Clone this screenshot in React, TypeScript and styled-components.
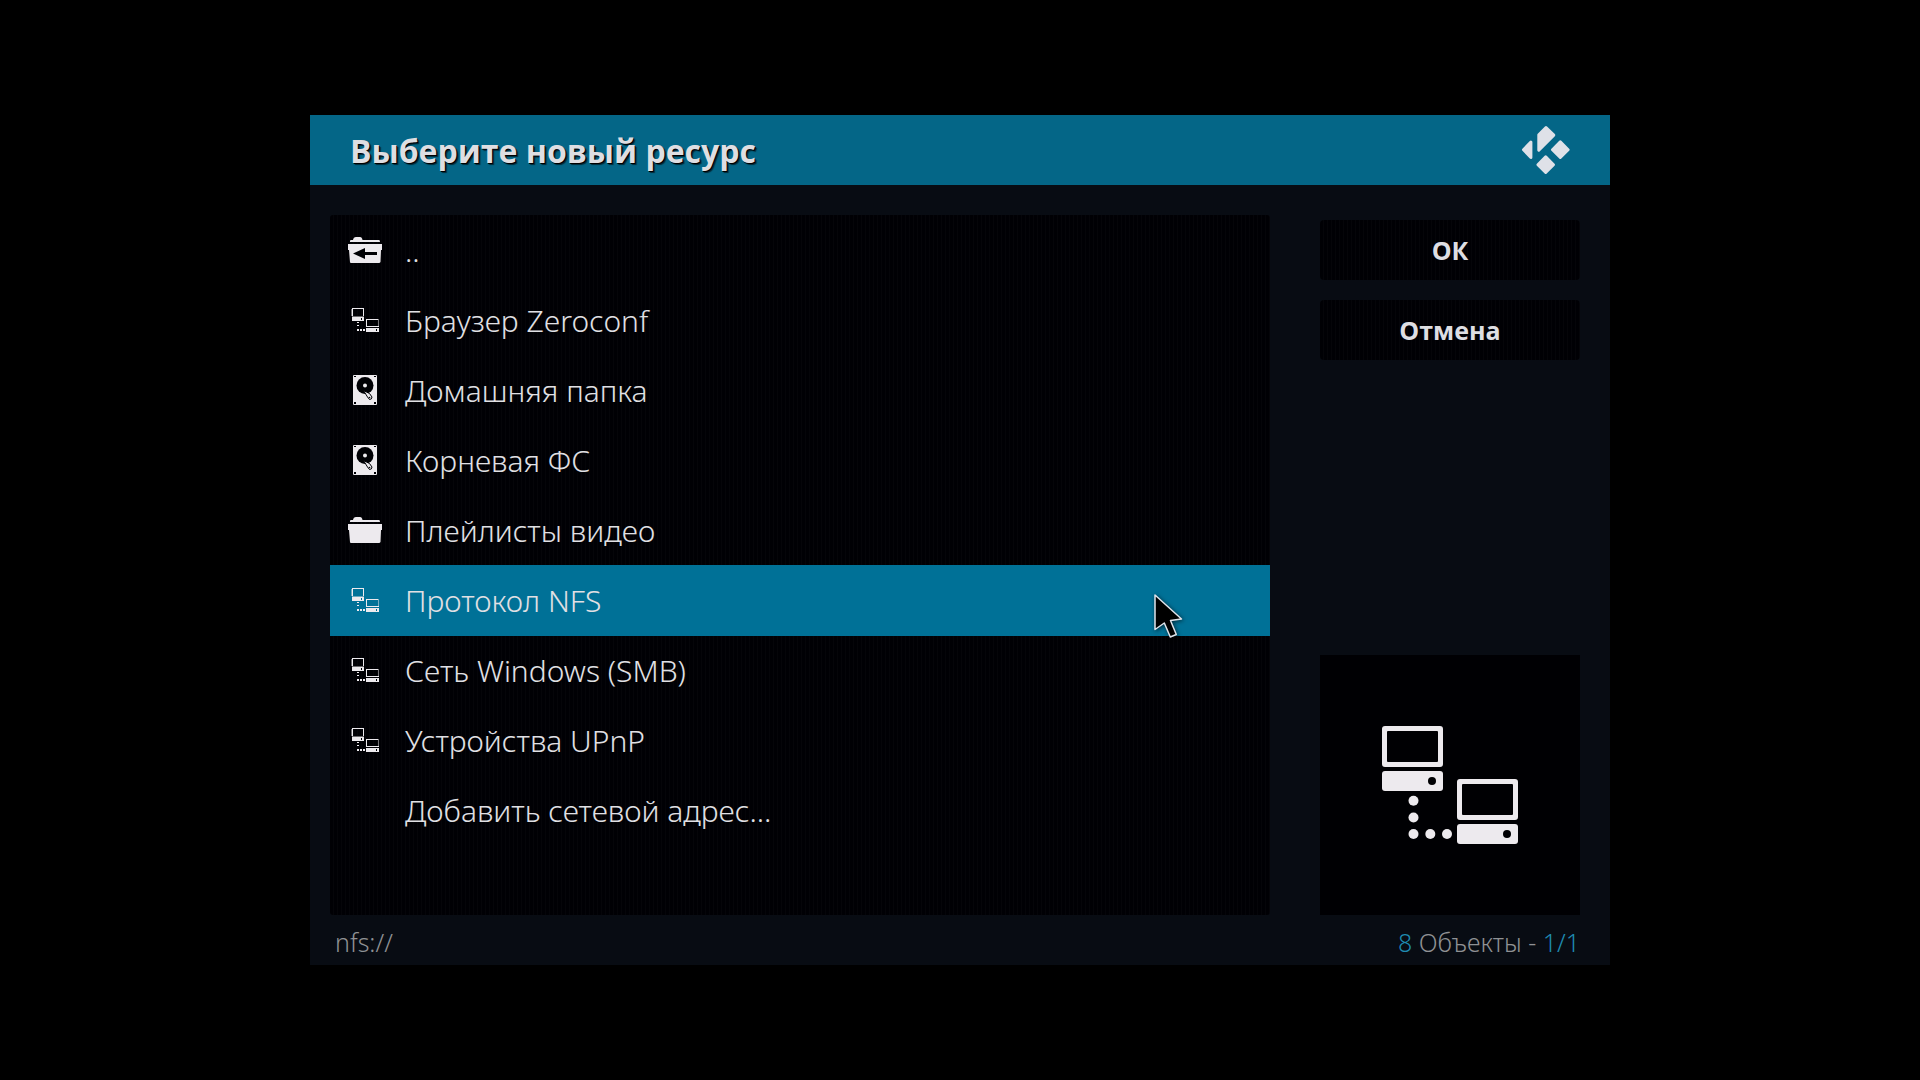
import React, { useState } from "react";
import styled, { createGlobalStyle } from "styled-components";

const colors = {
  backdrop: "#000000",
  dialog: "#080c13",
  panel: "#000004",
  stripe: "#050509",
  header: "#046687",
  accent: "#007197",
  text: "#e0e0e4",
  bright: "#dedee2",
  icon: "#edeaee",
  muted: "#8f9194",
  link: "#1f8ab0",
};

const GlobalStyle = createGlobalStyle`
  *, *::before, *::after { box-sizing: border-box; }
  body {
    margin: 0;
    background: ${colors.backdrop};
    color: ${colors.text};
    font-family: "Noto Sans", "Open Sans", sans-serif;
  }
`;

const Page = styled.main`
  min-height: 100vh;
  display: grid;
  place-items: center;
  padding: 20px;
`;

const Dialog = styled.section`
  width: 100%;
  max-width: 1300px;
  background: ${colors.dialog};
`;

const Header = styled.header`
  display: flex;
  align-items: center;
  justify-content: space-between;
  height: 70px;
  padding: 0 40px;
  background: ${colors.header};
`;

const Title = styled.h1`
  margin: 0;
  padding-top: 2px;
  font-family: "Open Sans", "Noto Sans", sans-serif;
  font-size: 32px;
  line-height: 44px;
  font-weight: 700;
  color: ${colors.bright};
  text-shadow: 1px 1px 0 #000, 2px 2px 1px rgba(0, 0, 0, 0.6);
`;

const Content = styled.div`
  display: flex;
  gap: 50px;
  padding: 30px 30px 0 20px;
`;

const striped = `
  background: repeating-linear-gradient(90deg, ${colors.panel} 0 3px, ${colors.stripe} 3px 4px);
`;

const Sources = styled.ul`
  flex: 1;
  min-height: 700px;
  margin: 0;
  padding: 0;
  list-style: none;
  border-radius: 3px;
  ${striped}
`;

const SourceItem = styled.li`
  position: relative;
`;

const SourceButton = styled.button<{ $selected: boolean }>`
  display: flex;
  align-items: center;
  gap: 20px;
  width: 100%;
  height: 70px;
  padding: 0 15px;
  border: 0;
  background: ${(p) => (p.$selected ? colors.accent : "transparent")};
  box-shadow: ${(p) => (p.$selected ? `0 1px 0 ${colors.accent}` : "none")};
  color: ${colors.text};
  font: 300 30px/40px "Noto Sans", "Open Sans", sans-serif;
  text-align: left;
`;

const SourceLabel = styled.span`
  padding-top: 2px;
`;

const IconSlot = styled.span`
  flex: none;
  width: 40px;
  height: 40px;
`;

const Side = styled.aside`
  display: flex;
  flex-direction: column;
  gap: 20px;
  width: 260px;
  padding-top: 5px;
`;

const ActionButton = styled.button`
  height: 60px;
  border: 0;
  border-radius: 4px;
  color: ${colors.bright};
  font: 700 25px/34px "Open Sans", "Noto Sans", sans-serif;
  ${striped}
`;

const Preview = styled.div`
  display: grid;
  place-items: center;
  height: 260px;
  margin-top: auto;
  background: #000003;
`;

const Footer = styled.footer`
  display: flex;
  justify-content: space-between;
  height: 50px;
  padding: 10px 30px 0 25px;
  font-size: 25px;
  line-height: 34px;
  font-weight: 300;
  color: ${colors.muted};
`;

const Count = styled.span`
  color: ${colors.link};
`;

const Pointer = styled.svg`
  position: absolute;
  top: 27px;
  right: 86px;
  pointer-events: none;
  filter: drop-shadow(1px 1px 2px rgba(0, 0, 0, 0.6));
`;

const KodiLogo = () => (
  <svg width="50" height="50" viewBox="-1 0 50 50" role="img" aria-label="Kodi">
    <g fill="#dfe1e8" stroke="#dfe1e8" strokeWidth="3" strokeLinejoin="round">
      <path d="M25 2.6 L32.8 10.1 L17.8 25.2 V9.8 Z" />
      <path d="M9.9 17 V32.4 L2.5 24.7 Z" />
      <path d="M39.3 16.9 L47.1 24.7 L39.3 32.5 L31.5 24.7 Z" />
      <path d="M24.7 31.9 L32.5 39.7 L24.7 47.5 L16.9 39.7 Z" />
    </g>
  </svg>
);

const LargeNetworkIcon = () => (
  <svg width="200" height="200" viewBox="0 0 200 200" aria-hidden="true">
    <g fill={colors.icon}>
      {[
        [32, 41],
        [107, 94],
      ].map(([x, y]) => (
        <g key={x} transform={`translate(${x} ${y})`}>
          <path
            fillRule="evenodd"
            d="M3 0H58Q61 0 61 3V38Q61 41 58 41H3Q0 41 0 38V3Q0 0 3 0ZM6 5Q5 5 5 6V35Q5 36 6 36H55Q56 36 56 35V6Q56 5 55 5Z"
          />
          <rect y="45" width="61" height="20" rx="3" />
          <circle cx="50" cy="55" r="4" fill="#000003" />
        </g>
      ))}
      <circle cx="63.5" cy="115.7" r="5" />
      <circle cx="63.5" cy="132.5" r="5" />
      <circle cx="63.5" cy="149" r="5" />
      <circle cx="80.3" cy="149" r="5" />
      <circle cx="97" cy="149" r="5" />
    </g>
  </svg>
);

const NetworkIcon = () => (
  <svg width="40" height="40" viewBox="0 0 40 40" aria-hidden="true">
    <g fill={colors.icon} shapeRendering="crispEdges">
      <path d="M7 8H19V9H7ZM7 8H8V16H7ZM18 8H19V16H18Z" />
      <path d="M7 16H19V17H7Z" opacity="0.45" />
      <path d="M6 9H7V16H6Z" opacity="0.45" />
      <path fillRule="evenodd" d="M7 17H19V21H7ZM16 18V20H17V18Z" />
      <path d="M21 19H33V20H21ZM21 19H22V27H21ZM21 26H34V27H21Z" />
      <path d="M33 19H34V27H33Z" opacity="0.5" />
      <path fillRule="evenodd" d="M21 28H34V32H21ZM31 29V31H32V29Z" />
      <path d="M12 22H14V23H12ZM12 25H14V26H12ZM12 29H14V31H12ZM15 29H17V31H15ZM18 29H20V31H18Z" />
    </g>
  </svg>
);

const DriveIcon = () => (
  <svg width="40" height="40" viewBox="0 0 40 40" aria-hidden="true">
    <rect x="8" y="5" width="24" height="30" rx="1" fill={colors.icon} />
    <g fill="#000004">
      <rect x="9" y="6" width="2" height="1" />
      <rect x="29" y="6" width="2" height="1" />
      <rect x="9" y="32" width="2" height="2" />
      <rect x="29" y="32" width="2" height="2" />
      <circle cx="20" cy="15.5" r="8.5" />
    </g>
    <circle cx="20" cy="15.5" r="2" fill={colors.icon} />
    <path
      d="M18.5 20.5 L24.5 23.5 L27 27 Q27 29.5 24.5 29.5 L22.5 27 Z"
      fill={colors.icon}
      stroke="#000004"
      strokeWidth="1"
      strokeLinejoin="round"
    />
    <circle cx="24.5" cy="27.5" r="0.8" fill="#000004" />
  </svg>
);

const FolderIcon = ({ back = false }: { back?: boolean }) => (
  <svg width="40" height="40" viewBox="0 0 40 40" aria-hidden="true">
    <g fill={colors.icon}>
      <path d="M5 12 V11 Q5 10 6 10 H8 Q8.5 7 11 7 H15 Q17 7 17.5 10 H34 Q35 10 35 12 Z" />
      <path d="M3 14 H37 V20 H36 L35.5 32 Q35 33 34 33 H6 Q5 33 5 32 L4 20 H3 Z" />
    </g>
    {back && <path d="M8 23.5 L20 18 V22 H32 V25 H20 V29 Z" fill="#000004" />}
  </svg>
);

const MousePointer = () => (
  <Pointer width="32" height="48" viewBox="0 0 32 48" aria-hidden="true">
    <path
      d="M3 3 V37.5 L12.3 31 L18.3 45 L24.3 42.5 L18.5 28.5 L29.5 27 Z"
      fill="#000"
      stroke="#dfe3ea"
      strokeWidth="1.5"
      strokeLinejoin="round"
    />
  </Pointer>
);

type IconKind = "back" | "network" | "drive" | "folder" | "none";

const sources: { label: string; icon: IconKind }[] = [
  { label: "..", icon: "back" },
  { label: "Браузер Zeroconf", icon: "network" },
  { label: "Домашняя папка", icon: "drive" },
  { label: "Корневая ФС", icon: "drive" },
  { label: "Плейлисты видео", icon: "folder" },
  { label: "Протокол NFS", icon: "network" },
  { label: "Сеть Windows (SMB)", icon: "network" },
  { label: "Устройства UPnP", icon: "network" },
  { label: "Добавить сетевой адрес...", icon: "none" },
];

const icons: Record<IconKind, React.ReactNode> = {
  back: <FolderIcon back />,
  network: <NetworkIcon />,
  drive: <DriveIcon />,
  folder: <FolderIcon />,
  none: null,
};

export default function App() {
  const [selected, setSelected] = useState(5);

  return (
    <>
      <GlobalStyle />
      <Page>
        <Dialog role="dialog" aria-labelledby="dialog-title">
          <Header>
            <Title id="dialog-title">Выберите новый ресурс</Title>
            <KodiLogo />
          </Header>
          <Content>
            <Sources>
              {sources.map((source, index) => (
                <SourceItem key={source.label}>
                  <SourceButton
                    type="button"
                    $selected={index === selected}
                    aria-pressed={index === selected}
                    onClick={() => setSelected(index)}
                  >
                    <IconSlot>{icons[source.icon]}</IconSlot>
                    <SourceLabel>{source.label}</SourceLabel>
                  </SourceButton>
                  {index === selected && <MousePointer />}
                </SourceItem>
              ))}
            </Sources>
            <Side>
              <ActionButton type="button">ОК</ActionButton>
              <ActionButton type="button">Отмена</ActionButton>
              <Preview>
                <LargeNetworkIcon />
              </Preview>
            </Side>
          </Content>
          <Footer>
            <span>nfs://</span>
            <span>
              <Count>8</Count> Объекты - <Count>1/1</Count>
            </span>
          </Footer>
        </Dialog>
      </Page>
    </>
  );
}
